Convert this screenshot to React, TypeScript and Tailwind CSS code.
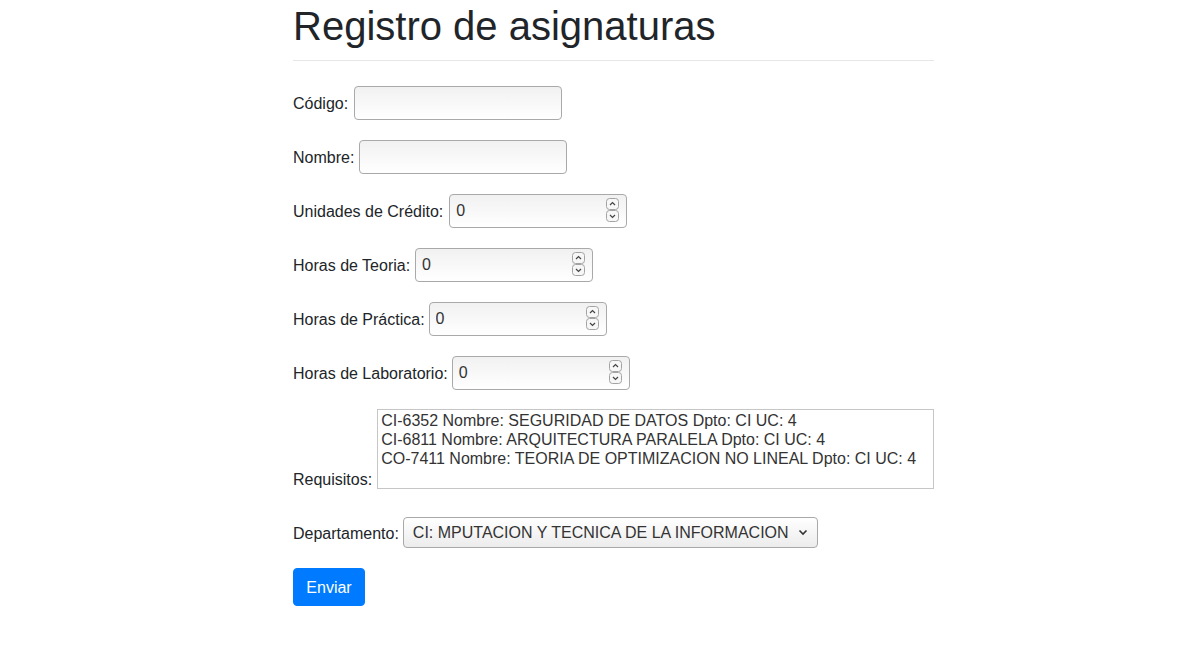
import { ReactNode } from "react";

function Spinner() {
  return (
    <svg width="14" height="25" viewBox="0 0 14 25" className="absolute right-[7px] top-[4px]">
      <rect x="0.5" y="0.5" width="12" height="11" rx="3" fill="#f7f7f7" stroke="#a3a3a3" />
      <rect x="0.5" y="12.5" width="12" height="11" rx="3" fill="#f7f7f7" stroke="#a3a3a3" />
      <path d="M4 7 L6.5 4.5 L9 7" fill="none" stroke="#444" strokeWidth="1.2" />
      <path d="M4 17 L6.5 19.5 L9 17" fill="none" stroke="#444" strokeWidth="1.2" />
    </svg>
  );
}

function Row({ label, children, className = "" }: { label: string; children: ReactNode; className?: string }) {
  return (
    <div className={`flex items-center ${className}`}>
      <label className="leading-[18px] pt-[2px]">{label}</label>
      {children}
    </div>
  );
}

function TextInput({ width }: { width: string }) {
  return (
    <input
      type="text"
      className={`${width} h-[34px] rounded-[4px] border border-[#a9a9a9] bg-gradient-to-b from-[#f1f1f1] to-white px-[6px] text-[#333] outline-none`}
    />
  );
}

function NumberInput() {
  return (
    <div className="relative">
      <input
        type="text"
        defaultValue="0"
        className="w-[178px] h-[34px] rounded-[4px] border border-[#a9a9a9] bg-gradient-to-b from-[#f1f1f1] to-white pl-[6px] pr-[24px] text-[#333] outline-none"
      />
      <Spinner />
    </div>
  );
}

const requisitos = [
  "CI-6352 Nombre: SEGURIDAD DE DATOS Dpto: CI UC: 4",
  "CI-6811 Nombre: ARQUITECTURA PARALELA Dpto: CI UC: 4",
  "CO-7411 Nombre: TEORIA DE OPTIMIZACION NO LINEAL Dpto: CI UC: 4",
];

export default function App() {
  return (
    <div className="min-h-screen bg-white font-['Liberation_Sans',Arial,sans-serif] text-base text-[#212529]">
      <div className="ml-[293px] w-[641px]">
        <h1 className="text-[40px] leading-[48px] pt-[2px] pb-[10px] border-b border-[#e6e6e6]">Registro de asignaturas</h1>

        <Row label="Código:" className="mt-[25px] gap-[6px]">
          <TextInput width="w-[208px]" />
        </Row>
        <Row label="Nombre:" className="mt-[20px] gap-[5px]">
          <TextInput width="w-[208px]" />
        </Row>
        <Row label="Unidades de Crédito:" className="mt-[20px] gap-[6px]">
          <NumberInput />
        </Row>
        <Row label="Horas de Teoria:" className="mt-[20px] gap-[5px]">
          <NumberInput />
        </Row>
        <Row label="Horas de Práctica:" className="mt-[20px] gap-[4px]">
          <NumberInput />
        </Row>
        <Row label="Horas de Laboratorio:" className="mt-[20px] gap-[4px]">
          <NumberInput />
        </Row>

        <div className="flex items-end gap-[5px] mt-[19px]">
          <label className="leading-[18px]">Requisitos:</label>
          <div className="flex-1 h-[80px] border border-[#c6c6c6] px-[3px] pt-[1px] text-[#333] leading-[19px]">
            {requisitos.map((r) => (
              <div key={r}>{r}</div>
            ))}
          </div>
        </div>

        <Row label="Departamento:" className="mt-[28px] gap-[4px]">
          <div className="relative">
            <select className="appearance-none w-[415px] h-[31px] rounded-[4px] border border-[#a9a9a9] bg-gradient-to-b from-white to-[#ececec] pl-[9px] pr-[24px] text-[#333] outline-none">
              <option>CI: MPUTACION Y TECNICA DE LA INFORMACION</option>
            </select>
            <svg width="10" height="7" viewBox="0 0 10 7" className="absolute right-[10px] top-[12px] pointer-events-none">
              <path d="M1.5 1.5 L5 5 L8.5 1.5" fill="none" stroke="#333" strokeWidth="1.6" />
            </svg>
          </div>
        </Row>

        <button className="mt-[20px] w-[72px] h-[38px] pt-[1px] rounded-[4px] bg-[#007bff] border border-[#007bff] text-white">
          Enviar
        </button>
      </div>
    </div>
  );
}
